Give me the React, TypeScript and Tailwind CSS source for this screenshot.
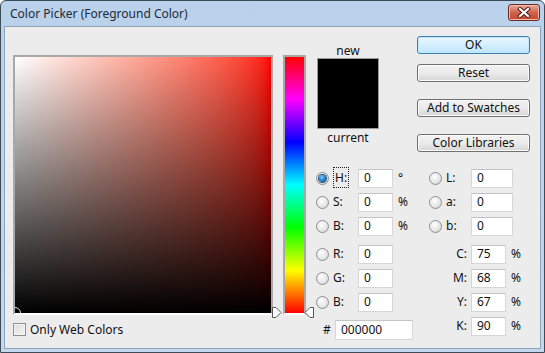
import React from 'react';

const font = { fontFamily: '"Noto Sans", "Open Sans", Arial, sans-serif' };

const Radio = ({ checked = false }: { checked?: boolean }) => (
  <span className="relative flex h-[13px] w-[13px] shrink-0 items-center justify-center rounded-full border border-[#8e8f8f] bg-[radial-gradient(circle_at_40%_35%,#ffffff,#e4e4e4_60%,#cfcfcf)]">
    {checked && (
      <span className="h-[7px] w-[7px] rounded-full bg-[radial-gradient(circle_at_40%_35%,#7fd0ff,#1b76c6_55%,#0c3f7a)] shadow-[0_0_0_1px_#1d4f80]" />
    )}
  </span>
);

const Field = ({ value, w = 'w-[35px]' }: { value: string; w?: string }) => (
  <div className={`${w} flex h-[19px] items-center border border-[#d6d6d6] border-t-[#c4c4c4] bg-white pl-[5px] text-[12px] text-[#111]`}>
    {value}
  </div>
);

const Btn = ({ label, primary = false, className = '' }: { label: string; primary?: boolean; className?: string }) => (
  <div
    className={`flex h-[18px] w-[113px] items-center justify-center rounded-[3px] border text-[12px] text-[#111] ${
      primary
        ? 'border-[#3c7fb1] bg-linear-to-b from-[#eaf6fd] to-[#bee6fd] shadow-[inset_0_0_0_1px_#c0e8fc]'
        : 'border-[#707070] bg-linear-to-b from-[#f2f2f2] via-[#ebebeb] to-[#d6d6d6] shadow-[inset_0_0_0_1px_#fcfcfc]'
    } ${className}`}
  >
    {label}
  </div>
);

const LeftRow = ({ k, v, unit, checked, focus }: { k: string; v: string; unit?: string; checked?: boolean; focus?: boolean }) => (
  <div className="flex h-[24px] items-center">
    <Radio checked={checked} />
    <div className="ml-[4px] w-[25px]">
      <span className={focus ? 'border border-dotted border-[#222] px-[1px] py-[1px]' : ''}>{k}</span>
    </div>
    <Field value={v} />
    {unit && <span className="ml-[5px]">{unit}</span>}
  </div>
);

const RightRow = ({ k, v }: { k: string; v: string }) => (
  <div className="flex h-[24px] items-center">
    <Radio />
    <span className="ml-[4px] w-[25px]">{k}</span>
    <Field value={v} w="w-[42px]" />
  </div>
);

const CmykRow = ({ k, v }: { k: string; v: string }) => (
  <div className="flex h-[24px] items-center">
    <span className="w-[38px] text-right">{k}</span>
    <div className="ml-[4px]">
      <Field value={v} />
    </div>
    <span className="ml-[5px]">%</span>
  </div>
);

const Marker = ({ dir }: { dir: 'right' | 'left' }) => (
  <svg width="10" height="11" viewBox="0 0 10 11">
    {dir === 'right' ? (
      <path d="M0.5 0.5 L4 0.5 L9 5.5 L4 10.5 L0.5 10.5 Z" fill="#fff" stroke="#555" />
    ) : (
      <path d="M9.5 0.5 L6 0.5 L1 5.5 L6 10.5 L9.5 10.5 Z" fill="#fff" stroke="#555" />
    )}
  </svg>
);

export default function App() {
  return (
    <div
      className="flex h-[353px] w-[545px] flex-col rounded-t-[6px] border border-[#3d4a57] bg-linear-to-b from-[#b9d1ea] to-[#c4d8ee] px-[3px] pb-[3px] text-[12px] text-[#111]"
      style={font}
    >
      {/* title bar */}
      <div className="flex h-[25px] shrink-0 items-center justify-between pl-[6px] pr-[1px]">
        <span className="text-[12px] text-[#1e2a3a]">Color Picker (Foreground Color)</span>
        <div className="mb-[3px] flex h-[17px] w-[32px] items-center justify-center rounded-[3px] border border-[#6d2a21] bg-linear-to-b from-[#e9a99b] via-[#d0634e] to-[#c7452e] shadow-[inset_0_0_0_1px_#f0b9ad]">
          <svg width="14" height="11" viewBox="0 0 14 11">
            <path d="M3 2 L11 9 M11 2 L3 9" stroke="#4a1b14" strokeWidth="4" strokeLinecap="square" />
            <path d="M3 2 L11 9 M11 2 L3 9" stroke="#fff" strokeWidth="2.2" strokeLinecap="square" />
          </svg>
        </div>
      </div>

      {/* client area */}
      <div className="flex flex-1 items-start border border-[#8ea4bc] bg-[#ececec] pl-[8px] pt-[9px]">
        {/* color field */}
        <div className="mt-[19px] flex flex-col">
          <div className="relative h-[260px] w-[260px] overflow-hidden border-2 border-[#a9a9a9] border-b-white bg-linear-to-r from-white to-[#ff0000]">
            <div className="absolute inset-0 bg-linear-to-b from-transparent to-black" />
            <div className="absolute bottom-[-6px] left-[-6px] h-[12px] w-[12px] rounded-full border border-[#e8e8e8]" />
          </div>
          <div className="mt-[8px] flex items-center">
            <span className="h-[13px] w-[13px] border border-[#8e8f8f] bg-linear-to-br from-[#dcdcdc] to-[#f6f6f6] shadow-[inset_0_0_0_1px_#f4f4f4]" />
            <span className="ml-[4px] leading-[13px]">Only Web Colors</span>
          </div>
        </div>

        {/* hue slider */}
        <div className="relative ml-[10px] mt-[19px]">
          <div className="h-[260px] w-[23px] border-2 border-[#a9a9a9] border-b-white bg-[linear-gradient(to_bottom,#ff0000,#ff00ff,#0000ff,#00ffff,#00ff00,#ffff00,#ff0000)] bg-clip-content" />
          <div className="absolute bottom-[-3px] left-[-11px]">
            <Marker dir="right" />
          </div>
          <div className="absolute bottom-[-3px] right-[-8px]">
            <Marker dir="left" />
          </div>
        </div>

        {/* right side */}
        <div className="ml-[10px] flex flex-col">
          <div className="flex">
            <div className="ml-[1px] flex w-[62px] flex-col items-center pt-[7px]">
              <span className="leading-[15px]">new</span>
              <div className="h-[71px] w-[62px] border border-[#9a9a9a] bg-black" />
              <span className="mt-[1px] leading-[15px]">current</span>
            </div>
            <div className="ml-[38px] flex flex-col">
              <Btn label="OK" primary />
              <Btn label="Reset" className="mt-[10px]" />
              <Btn label="Add to Swatches" className="mt-[17px]" />
              <Btn label="Color Libraries" className="mt-[17px]" />
            </div>
          </div>

          <div className="mt-[14px] flex">
            <div className="flex w-[113px] flex-col">
              <LeftRow k="H:" v="0" unit="°" checked focus />
              <LeftRow k="S:" v="0" unit="%" />
              <LeftRow k="B:" v="0" unit="%" />
              <div className="mt-[4px]">
                <LeftRow k="R:" v="0" />
                <LeftRow k="G:" v="0" />
                <LeftRow k="B:" v="0" />
              </div>
              <div className="mt-[4px] flex h-[24px] items-center pl-[7px]">
                <span className="w-[12px]">#</span>
                <div className="flex h-[20px] w-[78px] items-center border border-[#d6d6d6] border-t-[#c4c4c4] bg-white pl-[5px]">
                  000000
                </div>
              </div>
            </div>
            <div className="flex flex-col">
              <RightRow k="L:" v="0" />
              <RightRow k="a:" v="0" />
              <RightRow k="b:" v="0" />
              <div className="mt-[4px]">
                <CmykRow k="C:" v="75" />
                <CmykRow k="M:" v="68" />
                <CmykRow k="Y:" v="67" />
                <CmykRow k="K:" v="90" />
              </div>
            </div>
          </div>
        </div>
      </div>
    </div>
  );
}
